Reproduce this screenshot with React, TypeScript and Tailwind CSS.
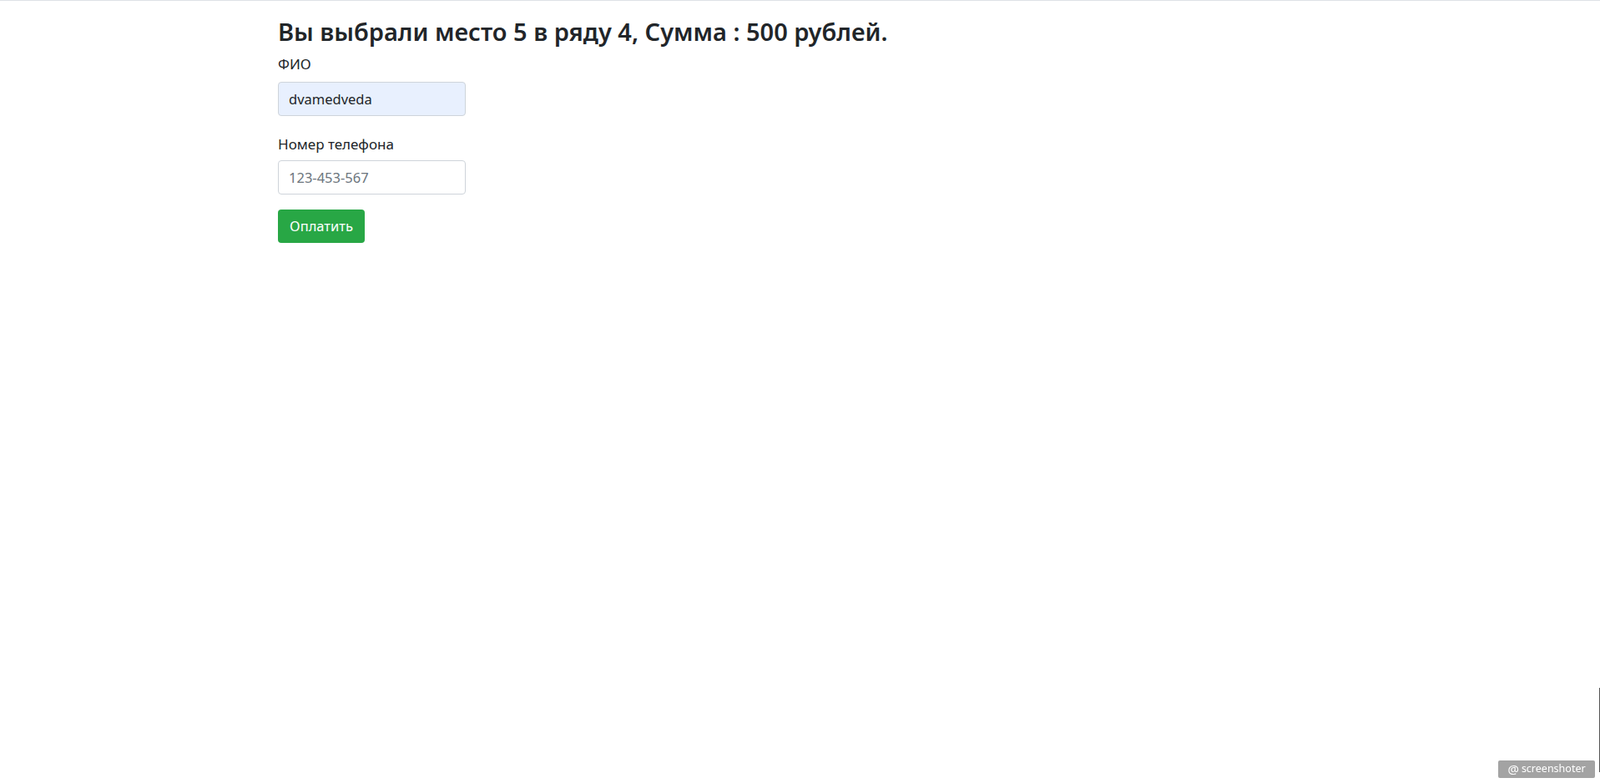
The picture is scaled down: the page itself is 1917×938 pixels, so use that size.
import { useState } from "react"

const font = { fontFamily: '"Noto Sans", "Open Sans", Arial, sans-serif' }

const Screenshoter = () => (
  <div className="fixed bottom-[6px] right-[6px] flex h-[21px] w-[116px] items-center justify-center gap-[3px] rounded-[2px] bg-[#a3a3a3] text-[12.5px] text-white">
    <span className="text-[15px] leading-none">@</span>
    <span>screenshoter</span>
  </div>
)

export default function App() {
  const [name, setName] = useState("dvamedveda")
  const [phone, setPhone] = useState("")

  return (
    <div className="min-h-screen bg-white text-[#212529]" style={font}>
      <div className="border-t border-[#dee2e6]" />
      <div className="pl-[333px] pt-[20px]">
        <h3 className="mb-[8px] text-[29px] font-semibold leading-[34px]">
          Вы выбрали место 5 в ряду 4, Сумма : 500 рублей.
        </h3>

        <form className="w-[225px]" onSubmit={(e) => e.preventDefault()}>
          {/* ФИО */}
          <div className="mb-[20px]">
            <label className="mb-[8px] block text-[17px] leading-[27px]">ФИО</label>
            <input
              value={name}
              onChange={(e) => setName(e.target.value)}
              className="block h-[41px] w-full rounded-[4px] border border-[#ced4da] bg-[#e8f0fe] px-[12px] text-[16.5px] text-[#212529] outline-none"
            />
          </div>

          {/* Телефон */}
          <div className="mb-[18px]">
            <label className="mb-[6px] block text-[17px] leading-[27px]">Номер телефона</label>
            <input
              value={phone}
              onChange={(e) => setPhone(e.target.value)}
              placeholder="123-453-567"
              className="block h-[41px] w-full rounded-[4px] border border-[#ced4da] bg-white px-[12px] text-[16.5px] text-[#495057] outline-none placeholder:text-[#6c757d]"
            />
          </div>

          <button
            type="submit"
            className="h-[40px] w-[104px] rounded-[4px] bg-[#28a745] text-[16.5px] text-white"
          >
            Оплатить
          </button>
        </form>
      </div>

      <div className="fixed bottom-[13px] right-0 h-[101px] w-[1px] bg-[#555]" />
      <Screenshoter />
    </div>
  )
}
